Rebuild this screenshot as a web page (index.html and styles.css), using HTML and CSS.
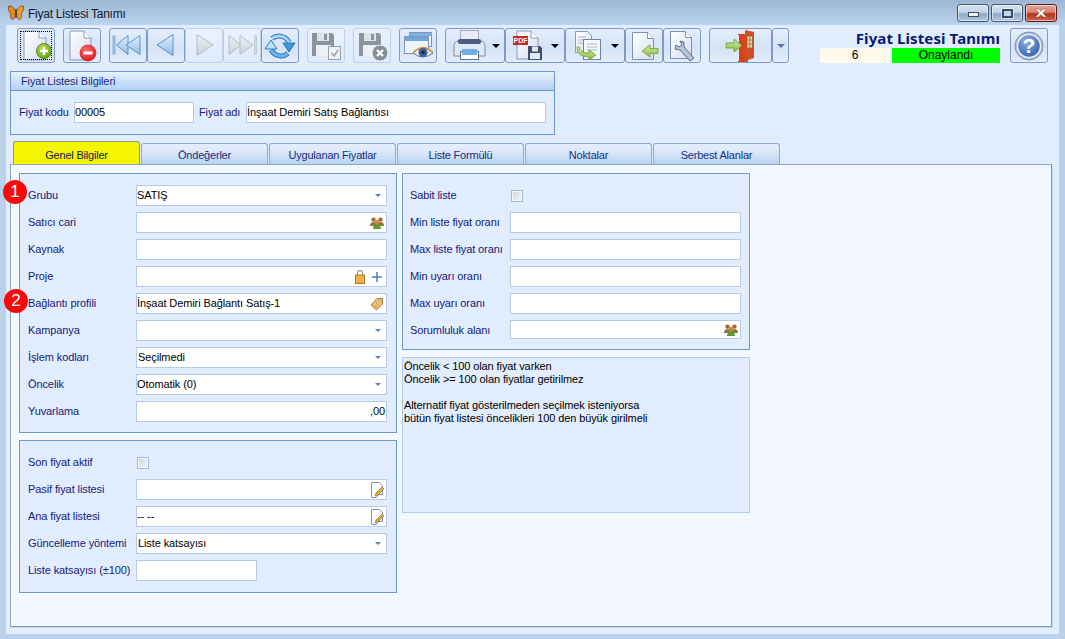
FILE: index.html
```html
<!DOCTYPE html>
<html lang="tr">
<head>
<meta charset="utf-8">
<title>Fiyat Listesi Tanımı</title>
<link rel="stylesheet" href="styles.css">
</head>
<body>
<svg class="defs" aria-hidden="true">
  <defs>
    <linearGradient id="gDoc" x1="0" y1="0" x2="1" y2="1"><stop offset="0" stop-color="#fff"/><stop offset="1" stop-color="#d3dff0"/></linearGradient>
    <linearGradient id="gNav" x1="0" y1="0" x2="0" y2="1"><stop offset="0" stop-color="#e2f0fb"/><stop offset="1" stop-color="#8fbce6"/></linearGradient>
    <linearGradient id="gOff" x1="0" y1="0" x2="0" y2="1"><stop offset="0" stop-color="#eef1f4"/><stop offset="1" stop-color="#c8d0d8"/></linearGradient>
    <linearGradient id="gArrow" x1="0" y1="0" x2="0" y2="1"><stop offset="0" stop-color="#d3eba5"/><stop offset="1" stop-color="#86bd45"/></linearGradient>
    <radialGradient id="gHelp" cx=".4" cy=".3" r=".8"><stop offset="0" stop-color="#8fb1e4"/><stop offset="1" stop-color="#2b57a8"/></radialGradient>
    <radialGradient id="gGreen" cx=".4" cy=".3" r=".8"><stop offset="0" stop-color="#b6dc4c"/><stop offset="1" stop-color="#5f9e12"/></radialGradient>
    <radialGradient id="gRed" cx=".4" cy=".3" r=".8"><stop offset="0" stop-color="#ff6a6a"/><stop offset="1" stop-color="#e0101c"/></radialGradient>
    <symbol id="people" viewBox="0 0 14 12">
      <circle cx="3.5" cy="2.600" r="2.200" fill="#a5692f"/><circle cx="10.500" cy="2.600" r="2.200" fill="#a5692f"/>
      <path d="M0 9c0-3 1.500-4 3.500-4S7 6 7 9z" fill="#8a7a3a"/><path d="M7 9c0-3 1.500-4 3.500-4S14 6 14 9z" fill="#8a7a3a"/>
      <circle cx="7" cy="5" r="2.200" fill="#c98a45"/><path d="M3 12c0-3 1.800-4.500 4-4.500s4 1.500 4 4.500z" fill="#5c9a35"/>
    </symbol>
    <symbol id="edit" viewBox="0 0 14 16">
      <path d="M1.500.5h8l3 3v9h-4l-2 3h-5z" fill="#fff" stroke="#7d93b8"/>
      <path d="M5 14l1-3 6-6 2 2-6 6z" fill="#e3a63a" stroke="#8a6a2a" stroke-width=".6"/>
    </symbol>
  </defs>
</svg>

<div class="titlebar">
  <svg class="butterfly" viewBox="0 0 16 16" aria-hidden="true">
    <path d="M7.500 6C6 2.500 3 .5.800 1c-.8 3 .2 6.500 2.200 7.500C1.800 10 2.500 14 4.500 14.800 6.500 14 7.300 10 7.500 6z" fill="#e88a1e" stroke="#6a3a10" stroke-width=".7"/>
    <path d="M8.500 6C10 2.500 13 .5 15.200 1c.8 3-.2 6.500-2.200 7.500 1.200 1.500.5 5.500-1.500 6.300C9.500 14 8.700 10 8.500 6z" fill="#f0a028" stroke="#6a3a10" stroke-width=".7"/>
    <rect x="7.400" y="4" width="1.200" height="9" fill="#3a2a18"/>
  </svg>
  <span class="titlebar-text">Fiyat Listesi Tanımı</span>
  <div class="winbtns">
    <div class="winbtn"><span class="glyph-min"></span></div>
    <div class="winbtn"><span class="glyph-max"></span></div>
    <div class="winbtn winbtn-close">
      <svg class="glyph-x" viewBox="0 0 14 10" aria-hidden="true"><path d="M1.500 1h3L7 3.300 9.500 1h3L8.800 5l3.700 4h-3L7 6.700 4.500 9h-3l3.700-4z" fill="#fff" stroke="#8a4a40" stroke-width=".5"/></svg>
    </div>
  </div>
</div>

<div class="client">
  <div class="toolbar">
    <div class="tb-group">
      <div class="tb tb-focus">
        <svg class="ic" viewBox="0 0 36 33" aria-hidden="true">
          <path d="M6 2h15l7 7v22H6z" fill="url(#gDoc)" stroke="#8a9ac4"/><path d="M21 2v7h7" fill="#fff" stroke="#8a9ac4"/>
          <circle cx="26" cy="22" r="7.500" fill="url(#gGreen)" stroke="#5a8a14"/><path d="M26 18v8M22 22h8" stroke="#fff" stroke-width="2.400"/>
        </svg>
      </div>
    </div>
    <div class="tb-group">
      <div class="tb">
        <svg class="ic" viewBox="0 0 36 33" aria-hidden="true">
          <path d="M6 2h14l7 7v22H6z" fill="url(#gDoc)" stroke="#8a9ac4"/><path d="M20 2v7h7" fill="#fff" stroke="#8a9ac4"/>
          <circle cx="24" cy="24" r="8" fill="url(#gRed)" stroke="#c01018" stroke-width=".6"/><rect x="19.500" y="22.500" width="9" height="3" fill="#fff"/>
        </svg>
      </div>
    </div>
    <div class="tb-group">
      <div class="tb">
        <svg class="ic" viewBox="0 0 36 33" aria-hidden="true">
          <rect x="3" y="7" width="2" height="18" fill="#a9cbea" stroke="#6c9fd0" stroke-width=".7"/>
          <path d="M18 6.500v19L6.500 16z" fill="url(#gNav)" stroke="#5c93cb"/><path d="M30 6.500v19L16 16z" fill="url(#gNav)" stroke="#5c93cb"/>
        </svg>
      </div>
      <div class="tb">
        <svg class="ic" viewBox="0 0 36 33" aria-hidden="true"><path d="M25 5.500v21L9 16z" fill="url(#gNav)" stroke="#5c93cb"/></svg>
      </div>
      <div class="tb tb-off">
        <svg class="ic" viewBox="0 0 36 33" aria-hidden="true"><path d="M11 5.500v21L27 16z" fill="url(#gOff)" stroke="#b4bcc6"/></svg>
      </div>
      <div class="tb tb-off">
        <svg class="ic" viewBox="0 0 36 33" aria-hidden="true">
          <path d="M5 6.500v19L17 16z" fill="url(#gOff)" stroke="#b4bcc6"/><path d="M16 6.500v19L29 16z" fill="url(#gOff)" stroke="#b4bcc6"/>
          <rect x="30.500" y="7" width="2" height="18" fill="#d6dbe0" stroke="#b4bcc6" stroke-width=".7"/>
        </svg>
      </div>
      <div class="tb">
        <svg class="ic" viewBox="0 0 36 33" aria-hidden="true">
          <path d="M10 9.500A11.500 11.500 0 0 1 27 13" fill="none" stroke="#2a78b8" stroke-width="5"/>
          <path d="M10 9.500A11.500 11.500 0 0 1 27 13" fill="none" stroke="#a8d6f4" stroke-width="3"/>
          <path d="M21 14h12l-6 9z" fill="#3f97d8" stroke="#2a78b8"/>
          <path d="M26 24.500A11.500 11.500 0 0 1 9 21" fill="none" stroke="#2a78b8" stroke-width="5"/>
          <path d="M26 24.500A11.500 11.500 0 0 1 9 21" fill="none" stroke="#6db5e8" stroke-width="3"/>
          <path d="M3 20h12L9 11z" fill="#bfe2f8" stroke="#2a78b8"/>
        </svg>
      </div>
    </div>
    <div class="tb-group">
      <div class="tb tb-off">
        <svg class="ic" viewBox="0 0 36 33" aria-hidden="true">
          <path d="M4 4h20l2 2v21H4z" fill="#8b939d"/><rect x="9" y="4" width="12" height="8" fill="#dde2e8"/><rect x="16" y="5" width="3" height="6" fill="#8b939d"/><rect x="8" y="16" width="15" height="11" fill="#eef1f4"/>
          <rect x="20.500" y="17.500" width="12" height="13" fill="#eef1f4" stroke="#9aa2ac"/><path d="M23.500 24l2.500 3 4-6" fill="none" stroke="#9aa2ac" stroke-width="1.500"/>
        </svg>
      </div>
    </div>
    <div class="tb-group">
      <div class="tb tb-off">
        <svg class="ic" viewBox="0 0 36 33" aria-hidden="true">
          <path d="M5 4h20l2 2v21H5z" fill="#8b939d"/><rect x="10" y="4" width="12" height="8" fill="#dde2e8"/><rect x="17" y="5" width="3" height="6" fill="#8b939d"/><rect x="9" y="16" width="15" height="11" fill="#eef1f4"/>
          <circle cx="26" cy="24" r="8" fill="#868e98" stroke="#eef1f4"/><path d="M23 21l6 6m0-6l-6 6" stroke="#fff" stroke-width="2.200"/>
        </svg>
      </div>
    </div>
    <div class="tb-group">
      <div class="tb">
        <svg class="ic" viewBox="0 0 36 33" aria-hidden="true">
          <rect x="9.500" y="3.500" width="22" height="14" fill="#eef4fb" stroke="#7f96bb"/><rect x="10" y="4" width="21" height="3" fill="#7fb0e2"/>
          <rect x="4.500" y="7.500" width="24" height="17" fill="#eef4fb" stroke="#7f96bb"/><rect x="5" y="8" width="23" height="4" fill="#6ea6de"/>
          <path d="M13 24q10-10 20 0q-10 8-20 0z" fill="#e9eef4" stroke="#66758c"/><path d="M13.500 23q10-9 19 0" fill="none" stroke="#d99a3c" stroke-width="1.500"/>
          <circle cx="23" cy="23.500" r="4.500" fill="#3f5f95"/><circle cx="23" cy="23.500" r="1.800" fill="#16284c"/>
        </svg>
      </div>
    </div>
    <div class="tb-group">
      <div class="tb tb-wide">
        <svg class="ic" viewBox="0 0 58 33" aria-hidden="true">
          <rect x="14.500" y="1.500" width="18" height="13" fill="#e8ecf2" stroke="#a0abbd"/>
          <path d="M8 17q0-5 5-5h21q5 0 5 5v10H8z" fill="#dfe8f5" stroke="#7b8ba8"/><rect x="12" y="10" width="23" height="5" rx="2" fill="#4c5d7e"/>
          <rect x="14.500" y="22.500" width="18" height="8" fill="#fff" stroke="#5f7290"/><rect x="16" y="20" width="15" height="6" fill="#71b0e0"/>
          <path d="M46 15h8l-4 4z" fill="#000"/>
        </svg>
      </div>
      <div class="tb tb-wide">
        <svg class="ic" viewBox="0 0 58 33" aria-hidden="true">
          <path d="M11 2h14l7 7v21H11z" fill="url(#gDoc)" stroke="#8a9ac4"/><path d="M25 2v7h7" fill="#fff" stroke="#8a9ac4"/>
          <rect x="7" y="7" width="15" height="9" fill="#c8262c"/><text class="pdf" x="14.500" y="14.200">PDF</text>
          <path d="M22 17h12l2 2v12H22z" fill="#3f5070"/><rect x="26" y="17.500" width="6" height="5" fill="#dfe6f0"/><rect x="24" y="24" width="10" height="6" fill="#dcebf8"/>
          <path d="M45 15h8l-4 4z" fill="#000"/>
        </svg>
      </div>
      <div class="tb tb-wide">
        <svg class="ic" viewBox="0 0 58 33" aria-hidden="true">
          <path d="M9.500 2.500h12l4 4v17h-16z" fill="url(#gDoc)" stroke="#8a9ac4"/>
          <path d="M12 8h8M12 11h8M12 14h8" stroke="#a8b4c8"/>
          <rect x="17.500" y="10.500" width="17" height="20" fill="#f4f7fb" stroke="#6f82a8"/><path d="M21 15h10M21 18h10M21 21h10" stroke="#a8b4c8"/>
          <path d="M13 18c1 4 4 6 10 6v-3l7 5-7 5v-3c-7 0-12-3-12-10z" fill="url(#gArrow)" stroke="#6a9a2e" stroke-width=".8"/>
          <path d="M45 15h8l-4 4z" fill="#000"/>
        </svg>
      </div>
      <div class="tb">
        <svg class="ic" viewBox="0 0 36 33" aria-hidden="true">
          <path d="M6.500 3.500h15l6 6v21h-21z" fill="url(#gDoc)" stroke="#7f8fb8"/><path d="M21.500 3.500v6h6" fill="#fff" stroke="#7f8fb8"/>
          <path d="M16 22l8-6v3.500h8v5h-8v3.500z" fill="url(#gArrow)" stroke="#6a9a2e" stroke-width=".8"/>
        </svg>
      </div>
      <div class="tb">
        <svg class="ic" viewBox="0 0 36 33" aria-hidden="true">
          <path d="M6.500 2.500h15l6 6v21h-21z" fill="url(#gDoc)" stroke="#7f8fb8"/><path d="M21.500 2.500v6h6" fill="#fff" stroke="#7f8fb8"/>
          <path d="M12 16l-1 4 5 1 10 11 4-3-10-11 0-5-4-1 2 4-3 2z" fill="#b6c4d6" stroke="#5c6b82"/>
        </svg>
      </div>
    </div>
    <div class="tb-group">
      <div class="tb-split">
        <div class="tb tb-door">
          <svg class="ic" viewBox="0 0 61 33" aria-hidden="true">
            <path d="M28 5h10v28h-10v-1h1V6h-1z" fill="#d8421a"/>
            <path d="M35 1l9 2v26l-9 3z" fill="#cf4f22"/>
            <rect x="37" y="7" width="5.500" height="12" fill="#e5d9a8" stroke="#9a4a20" stroke-width=".6"/><path d="M39.700 7v12M37 11h5.500M37 15h5.500" stroke="#9a4a20" stroke-width=".6"/>
            <path d="M16 14h8v-4l8 6.500-8 6.500v-4h-8z" fill="url(#gArrow)" stroke="#6a9a2e" stroke-width=".8"/>
          </svg>
        </div>
        <div class="tb tb-mini"><span class="arrow-down"></span></div>
      </div>
    </div>
    <div class="status-block">
      <div class="status-title">Fiyat Listesi Tanımı</div>
      <div class="status-row">
        <div class="status-num">6</div>
        <div class="status-ok">Onaylandı</div>
      </div>
    </div>
    <div class="tb tb-help">
      <svg class="ic" viewBox="0 0 36 33" aria-hidden="true">
        <circle cx="18" cy="17" r="14" fill="#aebfda" stroke="#7f90b0"/>
        <circle cx="18" cy="17" r="11.500" fill="url(#gHelp)" stroke="#e4ecf6" stroke-width="1.500"/>
        <text class="help-q" x="18" y="24">?</text>
      </svg>
    </div>
  </div>

  <section class="group">
    <h2 class="group-head">Fiyat Listesi Bilgileri</h2>
    <div class="group-body">
      <span class="lbl lbl-code">Fiyat kodu</span>
      <div class="field field-code"><span>00005</span></div>
      <span class="lbl lbl-name">Fiyat adı</span>
      <div class="field field-name"><span>İnşaat Demiri Satış Bağlantısı</span></div>
    </div>
  </section>

  <div class="tabs">
    <div class="tab tab-active">Genel Bilgiler</div>
    <div class="tab">Öndeğerler</div>
    <div class="tab">Uygulanan Fiyatlar</div>
    <div class="tab">Liste Formülü</div>
    <div class="tab">Noktalar</div>
    <div class="tab">Serbest Alanlar</div>
  </div>

  <div class="panel">
    <div class="col col-left">
      <div class="box box-a">
        <span class="badge badge-1">1</span>
        <span class="badge badge-2">2</span>
        <div class="form">
          <span class="lbl">Grubu</span>
          <div class="field"><span>SATIŞ</span><i class="drop"></i></div>
          <span class="lbl">Satıcı cari</span>
          <div class="field"><svg class="mini people"><use href="#people"/></svg></div>
          <span class="lbl">Kaynak</span>
          <div class="field"></div>
          <span class="lbl">Proje</span>
          <div class="field">
            <svg class="mini lock" viewBox="0 0 10 14" aria-hidden="true"><path d="M2.500 5V3a2.500 2.500 0 0 1 5 0v2" fill="none" stroke="#8f8f8f" stroke-width="1.200"/><rect x=".5" y="5" width="9" height="8.500" fill="#efb04a" stroke="#b57a20"/></svg>
            <svg class="mini plus" viewBox="0 0 12 12" aria-hidden="true"><path d="M6 1v10M1 6h10" stroke="#4c7fb8" stroke-width="1.500"/></svg>
          </div>
          <span class="lbl">Bağlantı profili</span>
          <div class="field"><span>İnşaat Demiri Bağlantı Satış-1</span>
            <svg class="mini tag" viewBox="0 0 14 14" aria-hidden="true"><path d="M1 8l6-6.500h5.500V7L6.500 13z" fill="#f0c578" stroke="#a87c34"/><path d="M4 8l3 3M6 6l3 3" stroke="#a87c34" stroke-width=".7"/><circle cx="10" cy="4" r="1.200" fill="#fff" stroke="#a87c34" stroke-width=".6"/></svg>
          </div>
          <span class="lbl">Kampanya</span>
          <div class="field"><i class="drop"></i></div>
          <span class="lbl">İşlem kodları</span>
          <div class="field field-pad"><span>Seçilmedi</span><i class="drop"></i></div>
          <span class="lbl">Öncelik</span>
          <div class="field"><span>Otomatik (0)</span><i class="drop"></i></div>
          <span class="lbl">Yuvarlama</span>
          <div class="field field-num"><span>,00</span></div>
        </div>
      </div>
      <div class="box box-b">
        <div class="form">
          <span class="lbl">Son fiyat aktif</span>
          <div class="check-cell"><i class="check"></i></div>
          <span class="lbl">Pasif fiyat listesi</span>
          <div class="field"><svg class="mini edit"><use href="#edit"/></svg></div>
          <span class="lbl">Ana fiyat listesi</span>
          <div class="field"><span>-- --</span><svg class="mini edit"><use href="#edit"/></svg></div>
          <span class="lbl">Güncelleme yöntemi</span>
          <div class="field field-pad"><span>Liste katsayısı</span><i class="drop"></i></div>
          <span class="lbl">Liste katsayısı (±100)</span>
          <div class="field field-short"></div>
        </div>
      </div>
    </div>
    <div class="col col-right">
      <div class="box box-c">
        <div class="form form-right">
          <span class="lbl">Sabit liste</span>
          <div class="check-cell"><i class="check"></i></div>
          <span class="lbl">Min liste fiyat oranı</span>
          <div class="field"></div>
          <span class="lbl">Max liste fiyat oranı</span>
          <div class="field"></div>
          <span class="lbl">Min uyarı oranı</span>
          <div class="field"></div>
          <span class="lbl">Max uyarı oranı</span>
          <div class="field"></div>
          <span class="lbl">Sorumluluk alanı</span>
          <div class="field field-thin"><svg class="mini people"><use href="#people"/></svg></div>
        </div>
      </div>
      <div class="info">Öncelik &lt; 100 olan fiyat varken<br>Öncelik &gt;= 100 olan fiyatlar getirilmez<br><br>Alternatif fiyat gösterilmeden seçilmek isteniyorsa<br>bütün fiyat listesi öncelikleri 100 den büyük girilmeli</div>
    </div>
  </div>
</div>
</body>
</html>
```

FILE: styles.css
```css
* { box-sizing: border-box; }
html, body { margin: 0; padding: 0; height: 100%; }
body {
  width: 1065px;
  height: 639px;
  overflow: hidden;
  background: #b9d1ea;
  display: flex;
  flex-direction: column;
  font-family: "Liberation Sans", "Noto Sans", sans-serif;
  font-size: 11px;
  letter-spacing: -.1px;
  color: #000;
}
.defs { width: 0; height: 0; display: block; flex: none; }

/* title bar */
.titlebar {
  flex: none;
  height: 25px;
  display: flex;
  align-items: center;
  padding: 0 8px 0 8px;
  background: linear-gradient(#9cb6d3, #bad3ee);
}
.butterfly { width: 16px; height: 16px; margin-right: 4px; margin-top: 1px; }
.titlebar-text { font-size: 12px; letter-spacing: -.25px; color: #0d1a2c; margin-top: 2px; }
.winbtns { margin-left: auto; display: flex; gap: 2px; align-self: flex-start; margin-top: 4px; }
.winbtn {
  width: 32px;
  height: 18px;
  border: 1px solid #46566c;
  border-radius: 3px;
  box-shadow: inset 0 0 0 1px rgba(255,255,255,.55);
  background: linear-gradient(#d6e2f0 0, #c3d3e6 45%, #8fa9c8 55%, #b2c7de 100%);
  display: flex;
  align-items: center;
  justify-content: center;
}
.winbtn-close {
  border-color: #5e1a18;
  background: linear-gradient(#e6a898 0, #d9816c 45%, #b4321c 55%, #c9654e 100%);
}
.glyph-min { width: 11px; height: 5px; border: 1px solid #3c4c66; background: #eef3f9; margin-top: 3px; }
.glyph-max { width: 11px; height: 9px; border: 2px solid #3c4c66; outline: 1px solid rgba(255,255,255,.5); background: #c8d6e6; }
.glyph-x { width: 14px; height: 10px; }

/* client */
.client {
  flex: none;
  width: 1053px;
  height: 609px;
  margin-left: 6px;
  background: #e1edfd;
  padding-top: 3px;
}

/* toolbar */
.toolbar { display: flex; height: 35px; padding: 0 11px; }
.tb-group { display: flex; margin-right: 8px; flex: none; }
.tb {
  flex: none;
  width: 38px;
  height: 35px;
  border: 1px solid #7d9bc6;
  border-radius: 3px;
  background: linear-gradient(#e6effb 0, #dbe7f8 30%, #d5e3f6 60%, #e3edfb 100%);
  position: relative;
}
.tb-off { border-color: #bfd0e6; background: linear-gradient(#e9f1fc, #dfeafa); }
.tb-wide { width: 60px; }
.tb-split { display: flex; }
.tb-door { width: 63px; }
.tb-mini { width: 17px; display: flex; align-items: center; justify-content: center; }
.tb-help { margin-left: 10px; }
.tb-focus::after {
  content: "";
  position: absolute;
  inset: 2px;
  border: 1px dotted #000;
}
.ic { display: block; width: 100%; height: 100%; }
.pdf { font: bold 7px "Liberation Sans", sans-serif; letter-spacing: 0; fill: #fff; text-anchor: middle; }
.help-q { font: bold 21px "Liberation Sans", sans-serif; letter-spacing: 0; fill: #fff; text-anchor: middle; }
.arrow-down { width: 0; height: 0; border: 4px solid transparent; border-top: 4px solid #5579ad; border-bottom: 0; }

.status-block { margin-left: auto; width: 180px; flex: none; display: flex; flex-direction: column; }
.status-title {
  height: 21px;
  font-family: "Noto Sans", "Liberation Sans", sans-serif;
  font-size: 15px;
  letter-spacing: .1px;
  line-height: 20px;
  font-weight: 700;
  color: #0a1a70;
  text-align: right;
  white-space: nowrap;
}
.status-row { display: flex; gap: 2px; height: 15px; line-height: 15px; font-size: 12px; letter-spacing: 0; }
.status-num { width: 70px; background: #fff9ee; text-align: center; }
.status-ok { width: 108px; background: #00ff00; text-align: center; }

/* header group */
.group {
  width: 545px;
  height: 64px;
  margin: 8px 0 0 4px;
  border: 1px solid #6a99d0;
  display: flex;
  flex-direction: column;
}
.group-head {
  margin: 0;
  height: 19px;
  padding-left: 10px;
  font-size: 11px;
  font-weight: 400;
  line-height: 18px;
  color: #16287a;
  background: linear-gradient(#e7f1fe, #b3d0f6);
  border-bottom: 1px solid #6a99d0;
  flex: none;
}
.group-body { display: flex; align-items: center; padding: 11px 0 0 8px; }
.group-body .field { height: 21px; }
.lbl { color: #14207e; white-space: nowrap; line-height: 13px; }
.lbl-code { width: 55px; }
.lbl-name { width: 47px; margin-left: 5px; }

/* fields */
.field {
  height: 21px;
  background: #fff;
  border: 1px solid #b6cae6;
  display: flex;
  align-items: center;
  padding: 0 0 2px 0;
  white-space: nowrap;
}
.field-code { width: 120px; }
.field-name { width: 300px; }
.field-pad { padding-left: 1px; }
.field-num { justify-content: flex-end; padding-right: 1px; }
.field-short { width: 121px; }
.field-thin { height: 19px; align-self: start; }
.drop {
  margin-left: auto;
  margin-right: 5px;
  margin-top: 2px;
  width: 0;
  height: 0;
  border: 3.500px solid transparent;
  border-top: 3.500px solid #5b7fb2;
  border-bottom: 0;
}
.mini { flex: none; display: block; margin-top: 2px; }
.people { width: 14px; height: 12px; margin-left: auto; margin-right: 2px; }
.lock { width: 10px; height: 14px; margin-left: auto; margin-right: 6px; }
.plus { width: 12px; height: 12px; margin-right: 3px; }
.tag { width: 14px; height: 14px; margin-left: auto; margin-right: 2px; }
.edit { width: 14px; height: 16px; margin-left: auto; margin-right: 2px; }

/* tabs */
.tabs { display: flex; gap: 1px; align-items: flex-end; height: 23px; margin-top: 6px; padding-left: 7px; letter-spacing: -.2px; }
.tab {
  width: 127px;
  height: 21px;
  border: 1px solid #8fa8cc;
  border-bottom: 0;
  border-radius: 3px 3px 0 0;
  background: linear-gradient(#e5eefb 0, #dbe7f8 40%, #b9d3f3 100%);
  color: #16307f;
  text-align: center;
  line-height: 22px;
}
.tab-active { height: 23px; background: #f5f500; color: #0d1a40; line-height: 26px; border-color: #8a9a8a; }

/* panel */
.panel {
  width: 1042px;
  height: 463px;
  margin-left: 4px;
  border: 1px solid #8ea6ca;
  border-right-color: #7f97be;
  border-bottom-color: #7f97be;
  box-shadow: 1px 1px 0 #c4d6ee;
  background: #f3f8ff;
  display: flex;
  gap: 5px;
  padding: 8px 0 0 8px;
}
.col { display: flex; flex-direction: column; flex: none; }
.col-left { width: 378px; gap: 7px; }
.col-right { width: 348px; gap: 7px; }
.box { background: #e1edfd; border: 1px solid #6a99d0; position: relative; padding: 11px 0 0 8px; }
.box-a { height: 260px; }
.box-b { height: 153px; }
.box-c { height: 177px; padding-left: 7px; }
.form {
  display: grid;
  grid-template-columns: 108px 251px;
  grid-auto-rows: 21px;
  row-gap: 6px;
  align-items: center;
}
.form-right { grid-template-columns: 100px 231px; }
.check-cell { display: flex; align-items: center; padding-left: 1px; }
.check {
  width: 12px;
  height: 12px;
  border: 1px solid #a4bad8;
  background: linear-gradient(135deg, #cfd3d8, #f6f7f8);
  box-shadow: inset 0 0 0 1px #f2f5f9;
}
.info {
  height: 156px;
  background: #e1edfd;
  border: 1px solid #b5cbe8;
  padding: 2px 0 0 1px;
  line-height: 13px;
}

/* numbered badges */
.badge {
  position: absolute;
  width: 24px;
  height: 24px;
  border-radius: 50%;
  background: #f80a0a;
  color: #fff;
  font-size: 17px;
  line-height: 24px;
  text-align: center;
}
.badge-1 { left: -17px; top: 6px; }
.badge-2 { left: -16px; top: 115px; }
```
